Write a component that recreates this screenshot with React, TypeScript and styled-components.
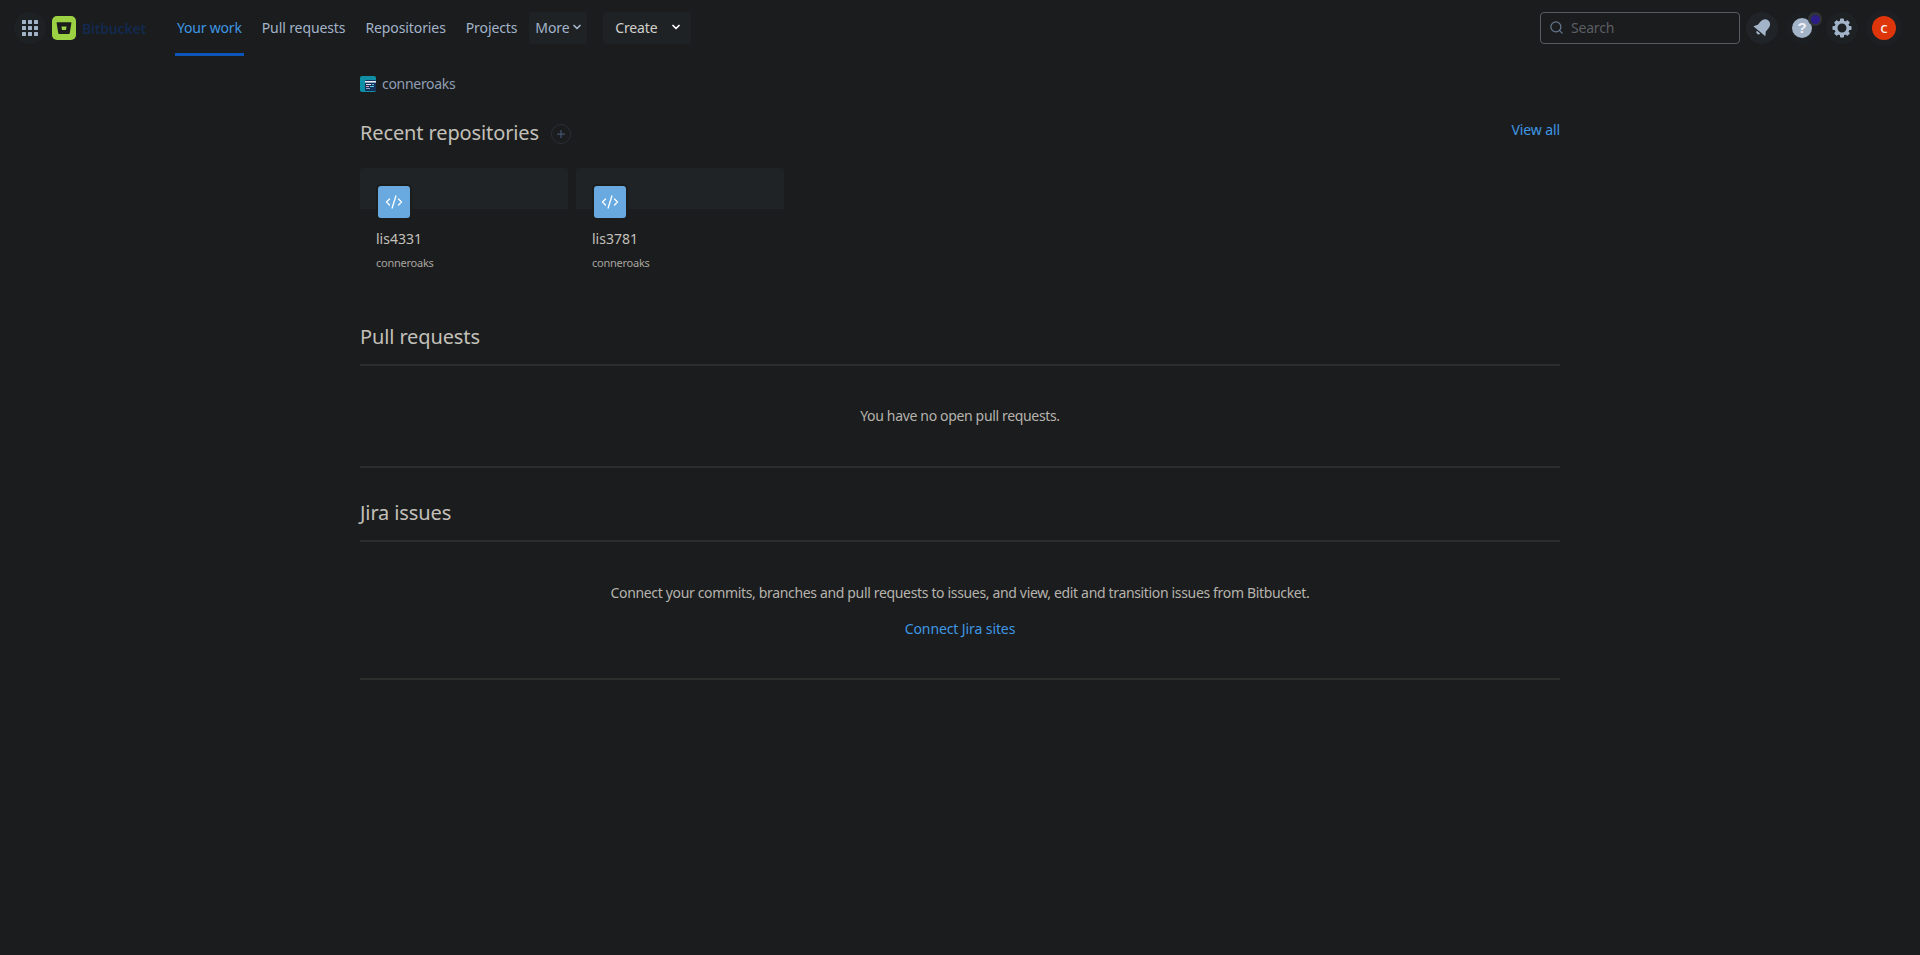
import React from "react";
import styled, { createGlobalStyle } from "styled-components";
import { ChevronDown, CodeXml, Plus, Search } from "lucide-react";

const Global = createGlobalStyle`
  html, body { margin: 0; padding: 0; height: 100%; background: #1a1c1e; }
  body { font-family: "Noto Sans", "Open Sans", sans-serif; font-size: 14px; color: #c3c0b9; }
  * { box-sizing: border-box; }
`;

const Page = styled.div`
  min-height: 955px;
  background: #1a1c1e;
`;

const Nav = styled.header`
  height: 56px;
  display: flex;
  align-items: center;
  padding: 0 18px 0 14px;
`;

const RoundButton = styled.button<{ $mr?: number; $bg?: string }>`
  width: 32px;
  height: 32px;
  border: 0;
  padding: 0;
  border-radius: 50%;
  background: ${(p) => p.$bg ?? "#1d2124"};
  display: flex;
  align-items: center;
  justify-content: center;
  position: relative;
  margin-right: ${(p) => p.$mr ?? 0}px;
  flex: none;
`;

const AppDots = styled.span`
  display: grid;
  grid-template-columns: repeat(3, 4.4px);
  grid-auto-rows: 4.4px;
  gap: 1.4px;
  i { background: #a3b4c9; border-radius: 0.5px; display: block; }
`;

const Brand = styled.div`
  display: flex;
  align-items: center;
  gap: 6px;
  margin: 0 29px 0 6px;
  color: #13294d;
  font-size: 14px;
  font-weight: 600;
  letter-spacing: -0.2px;
  width: 94px;
  flex: none;
`;

const NavLink = styled.a<{ $active?: boolean }>`
  height: 56px;
  display: flex;
  align-items: center;
  padding: 0 2px 2px;
  margin-right: 16px;
  font-size: 14px;
  letter-spacing: ${(p) => (p.$active ? "-0.2px" : "-0.1px")};
  color: ${(p) => (p.$active ? "#3f97e4" : "#a3b4c9")};
  position: relative;
  flex: none;
  &::after {
    content: "";
    display: ${(p) => (p.$active ? "block" : "none")};
    position: absolute;
    left: 0;
    right: 0;
    bottom: 0;
    height: 3px;
    background: #0c55b8;
  }
`;

const More = styled.button`
  width: 58px;
  height: 32px;
  margin-left: -6px;
  margin-right: 16px;
  padding: 0 0 2px 2px;
  border: 0;
  border-radius: 3px;
  background: #1e2225;
  color: #a3b4c9;
  font: inherit;
  letter-spacing: -0.1px;
  display: flex;
  align-items: center;
  justify-content: center;
  gap: 2px;
  flex: none;
`;

const Create = styled.button`
  width: 88px;
  height: 32px;
  border: 0;
  padding: 0 0 2px 2px;
  border-radius: 3px;
  background: #1e2225;
  color: #d2d0cb;
  font: inherit;
  letter-spacing: -0.1px;
  display: flex;
  align-items: center;
  justify-content: center;
  gap: 12px;
  flex: none;
`;

const Spacer = styled.div`
  flex: 1;
`;

const SearchBox = styled.div`
  width: 200px;
  height: 32px;
  border: 1px solid #585c60;
  border-radius: 4px;
  display: flex;
  align-items: center;
  padding: 0 0 2px 8px;
  gap: 7px;
  color: #5a5e62;
  letter-spacing: -0.2px;
  margin-right: 6px;
  flex: none;
`;

const Badge = styled.span`
  position: absolute;
  top: 0;
  right: -4px;
  width: 14px;
  height: 14px;
  border-radius: 50%;
  background: #303438;
  display: flex;
  align-items: center;
  justify-content: center;
  &::before {
    content: "";
    width: 9px;
    height: 9px;
    border-radius: 50%;
    background: #2a1e86;
  }
`;

const HelpDisc = styled.span`
  width: 20px;
  height: 20px;
  border-radius: 50%;
  background: #a3b4c9;
  color: #eef1f5;
  font-size: 15px;
  font-weight: 700;
  line-height: 20px;
  text-align: center;
`;

const AvatarRing = styled.div`
  width: 36px;
  height: 36px;
  margin-left: 8px;
  border-radius: 50%;
  background: #1c2023;
  display: flex;
  align-items: center;
  justify-content: center;
  flex: none;
`;

const Avatar = styled.div`
  width: 24px;
  height: 24px;
  border-radius: 50%;
  background: #de350b;
  color: #f5f3ef;
  font-size: 11px;
  font-weight: 600;
  display: flex;
  align-items: center;
  justify-content: center;
`;

const Main = styled.main`
  width: 1200px;
  margin: 0 auto;
  padding-top: 20px;
`;

const Workspace = styled.div`
  display: flex;
  align-items: center;
  gap: 6px;
  height: 16px;
  color: #8f9fb3;
  letter-spacing: -0.3px;
  span { position: relative; top: -1px; }
`;

const SectionHead = styled.div`
  display: flex;
  align-items: center;
  justify-content: space-between;
  margin-top: 29px;
  height: 24px;
`;

const TitleRow = styled.div`
  display: flex;
  align-items: center;
  gap: 12px;
`;

const Heading = styled.h2`
  margin: 0;
  font-size: 20px;
  line-height: 24px;
  font-weight: 400;
  color: #c3c0b9;
  letter-spacing: -0.12px;
`;

const AddButton = styled.span`
  width: 20px;
  height: 20px;
  margin-top: 2px;
  border-radius: 50%;
  border: 1px solid #2a2f34;
  display: flex;
  align-items: center;
  justify-content: center;
  color: #44546f;
`;

const Link = styled.a`
  color: #3f97e4;
  letter-spacing: -0.1px;
`;

const ViewAll = styled(Link)`
  margin-top: -8px;
`;

const Cards = styled.div`
  display: flex;
  gap: 8px;
  margin-top: 23px;
`;

const Card = styled.div`
  width: 208px;
  height: 116px;
  position: relative;
  padding: 60px 16px 0;
`;

const CardTop = styled.div`
  position: absolute;
  top: 0;
  left: 0;
  right: 0;
  height: 41px;
  background: #1f2325;
  border-radius: 3px 3px 0 0;
`;

const RepoIcon = styled.div`
  position: absolute;
  top: 16px;
  left: 16px;
  width: 36px;
  height: 36px;
  border: 2px solid #1a1c1e;
  border-radius: 5px;
  background: #68aae0;
  color: #fff;
  display: flex;
  align-items: center;
  justify-content: center;
`;

const RepoName = styled.div`
  font-size: 14px;
  line-height: 20px;
  margin-top: 1px;
  color: #c3c0b9;
`;

const RepoOwner = styled.div`
  font-size: 11px;
  line-height: 14px;
  margin-top: 7px;
  color: #a8a59e;
  letter-spacing: -0.25px;
`;

const Section = styled.section<{ $top: number }>`
  margin-top: ${(p) => p.$top}px;
`;

const SectionTitle = styled.div`
  height: 28px;
  padding-bottom: 11px;
  border-bottom: 2px solid #2b2e2b;
  box-sizing: content-box;
`;

const Body = styled.div<{ $h: number; $pad: number }>`
  height: ${(p) => p.$h}px;
  border-bottom: 2px solid #2b2e2b;
  display: flex;
  flex-direction: column;
  align-items: center;
  padding-top: ${(p) => p.$pad}px;
  color: #b6b3ac;
  letter-spacing: -0.34px;
  line-height: 20px;
`;

const JiraLink = styled(Link)`
  margin-top: 16px;
`;

const BucketLogo = () => (
  <svg width="24" height="24" viewBox="0 0 24 24">
    <rect width="24" height="24" rx="5" fill="#9bd143" />
    <path
      fillRule="evenodd"
      d="M5.2 6.2h13.6a.6.6 0 0 1 .6.7l-1.700 10.400a.8.8 0 0 1-.8.7H7.100a.8.8 0 0 1-.8-.7L4.600 6.900a.6.6 0 0 1 .6-.7Zm4.200 4.200.6 3.600h4l.6-3.600Z"
      fill="#1a1c1e"
    />
  </svg>
);

const WorkspaceLogo = () => (
  <svg width="16" height="16" viewBox="0 0 16 16">
    <rect width="16" height="16" rx="2" fill="#0e8fa6" />
    <rect x="5" y="4" width="11" height="11" rx="1" fill="#16305c" />
    <rect x="5" y="5" width="11" height="1.6" fill="#e8eef5" />
    <rect x="6" y="8" width="5" height="1" fill="#dbe4ee" />
    <rect x="12" y="8" width="2" height="1" fill="#5cc3e0" />
    <rect x="6" y="10" width="3" height="1" fill="#f0a0a8" />
    <rect x="10" y="10" width="4" height="1" fill="#5cc3e0" />
    <rect x="6" y="12" width="4" height="1" fill="#8fa6c9" />
  </svg>
);

const BellIcon = () => (
  <svg width="26" height="26" viewBox="0 0 20 20">
    <g transform="rotate(40 10 10)" fill="#a3b4c9">
      <path d="M10 2.500c2.600 0 4 2.100 4 4.700v3l2 3H4l2-3v-3c0-2.600 1.400-4.700 4-4.700Z" />
      <path d="M8.300 14.200h3.400a1.700 1.700 0 0 1-3.400 0Z" />
    </g>
  </svg>
);

const GearIcon = () => (
  <svg width="22" height="22" viewBox="0 0 22 22">
    <circle cx="11" cy="11" r="6" fill="none" stroke="#a3b4c9" strokeWidth="3" />
    {[0, 45, 90, 135, 180, 225, 270, 315].map((a) => (
      <rect key={a} x="9" y="1.500" width="4" height="3.500" rx="0.8" fill="#a3b4c9" transform={`rotate(${a} 11 11)`} />
    ))}
  </svg>
);

const repos = ["lis4331", "lis3781"];

export default function App() {
  return (
    <Page>
      <Global />
      <Nav>
        <RoundButton aria-label="Apps">
          <AppDots>
            {Array.from({ length: 9 }, (_, i) => (
              <i key={i} />
            ))}
          </AppDots>
        </RoundButton>
        <Brand>
          <BucketLogo />
          Bitbucket
        </Brand>
        <NavLink $active>Your work</NavLink>
        <NavLink>Pull requests</NavLink>
        <NavLink>Repositories</NavLink>
        <NavLink>Projects</NavLink>
        <More>
          More
          <ChevronDown size={12} strokeWidth={3.5} />
        </More>
        <Create>
          Create
          <ChevronDown size={12} strokeWidth={3.5} color="#ffffff" />
        </Create>
        <Spacer />
        <SearchBox>
          <Search size={15} color="#66788f" />
          Search
        </SearchBox>
        <RoundButton aria-label="Notifications" $mr={8} $bg="#202428">
          <BellIcon />
        </RoundButton>
        <RoundButton aria-label="Help" $mr={8} $bg="#1b1f22">
          <HelpDisc>?</HelpDisc>
          <Badge />
        </RoundButton>
        <RoundButton aria-label="Settings">
          <GearIcon />
        </RoundButton>
        <AvatarRing>
          <Avatar>C</Avatar>
        </AvatarRing>
      </Nav>
      <Main>
        <Workspace>
          <WorkspaceLogo />
          <span>conneroaks</span>
        </Workspace>
        <SectionHead>
          <TitleRow>
            <Heading>Recent repositories</Heading>
            <AddButton>
              <Plus size={12} strokeWidth={2.5} />
            </AddButton>
          </TitleRow>
          <ViewAll>View all</ViewAll>
        </SectionHead>
        <Cards>
          {repos.map((r) => (
            <Card key={r}>
              <CardTop />
              <RepoIcon>
                <CodeXml size={18} strokeWidth={1.75} />
              </RepoIcon>
              <RepoName>{r}</RepoName>
              <RepoOwner>conneroaks</RepoOwner>
            </Card>
          ))}
        </Cards>
        <Section $top={41}>
          <SectionTitle>
            <Heading>Pull requests</Heading>
          </SectionTitle>
          <Body $h={102} $pad={40}>You have no open pull requests.</Body>
        </Section>
        <Section $top={33}>
          <SectionTitle>
            <Heading>Jira issues</Heading>
          </SectionTitle>
          <Body $h={138} $pad={41}>
            Connect your commits, branches and pull requests to issues, and view, edit and transition issues from Bitbucket.
            <JiraLink>Connect Jira sites</JiraLink>
          </Body>
        </Section>
      </Main>
    </Page>
  );
}
